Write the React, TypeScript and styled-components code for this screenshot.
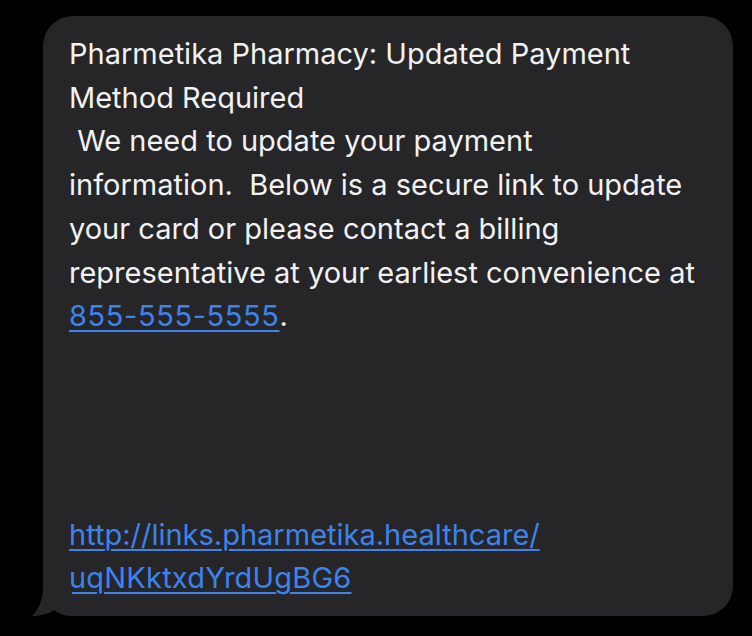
import React from "react";
import styled, { createGlobalStyle } from "styled-components";

const Global = createGlobalStyle`
  html, body { margin: 0; padding: 0; background: #000; }
  body { width: 752px; height: 636px; overflow: hidden; }
`;

const Page = styled.div`
  width: 752px;
  height: 636px;
  box-sizing: border-box;
  padding: 16px 19px 0 43px;
  background: #000;
`;

const Bubble = styled.div`
  position: relative;
  box-sizing: border-box;
  width: 690px;
  padding: 16px 20px 16px 26px;
  background: #262628;
  border-radius: 30px;
`;

const Tail = styled.svg`
  position: absolute;
  left: -11px;
  bottom: 0;
  width: 40px;
  height: 30px;
`;

const Text = styled.div`
  font-family: Inter, "Liberation Sans", sans-serif;
  font-size: 29px;
  line-height: 43.7px;
  color: #f2f2f2;
  white-space: pre;
`;

const Link = styled.span<{ $spacing?: number }>`
  color: #3c83ee;
  text-decoration: underline;
  text-decoration-thickness: 2px;
  text-underline-offset: 4px;
  letter-spacing: ${(p) => p.$spacing ?? 0}px;
`;

export default function App() {
  return (
    <>
      <Global />
      <Page>
        <Bubble>
          <Text>
            {"Pharmetika Pharmacy: Updated Payment\nMethod Required\n We need to update your payment\ninformation.  Below is a secure link to update\nyour card or please contact a billing\nrepresentative at your earliest convenience at\n"}
            <Link $spacing={0.6}>855-555-5555</Link>
            {".\n\n\n\n\n"}
            <Link>http://links.pharmetika.healthcare/</Link>
            {"\n"}
            <Link $spacing={0.2}>uqNKktxdYrdUgBG6</Link>
          </Text>
          <Tail viewBox="0 0 40 30">
            <path d="M11 0 C11 12 8 22 0 30 C8 30 16 28 22 24 C26 27 32 30 40 30 L40 0 Z" fill="#262628" />
          </Tail>
        </Bubble>
      </Page>
    </>
  );
}
